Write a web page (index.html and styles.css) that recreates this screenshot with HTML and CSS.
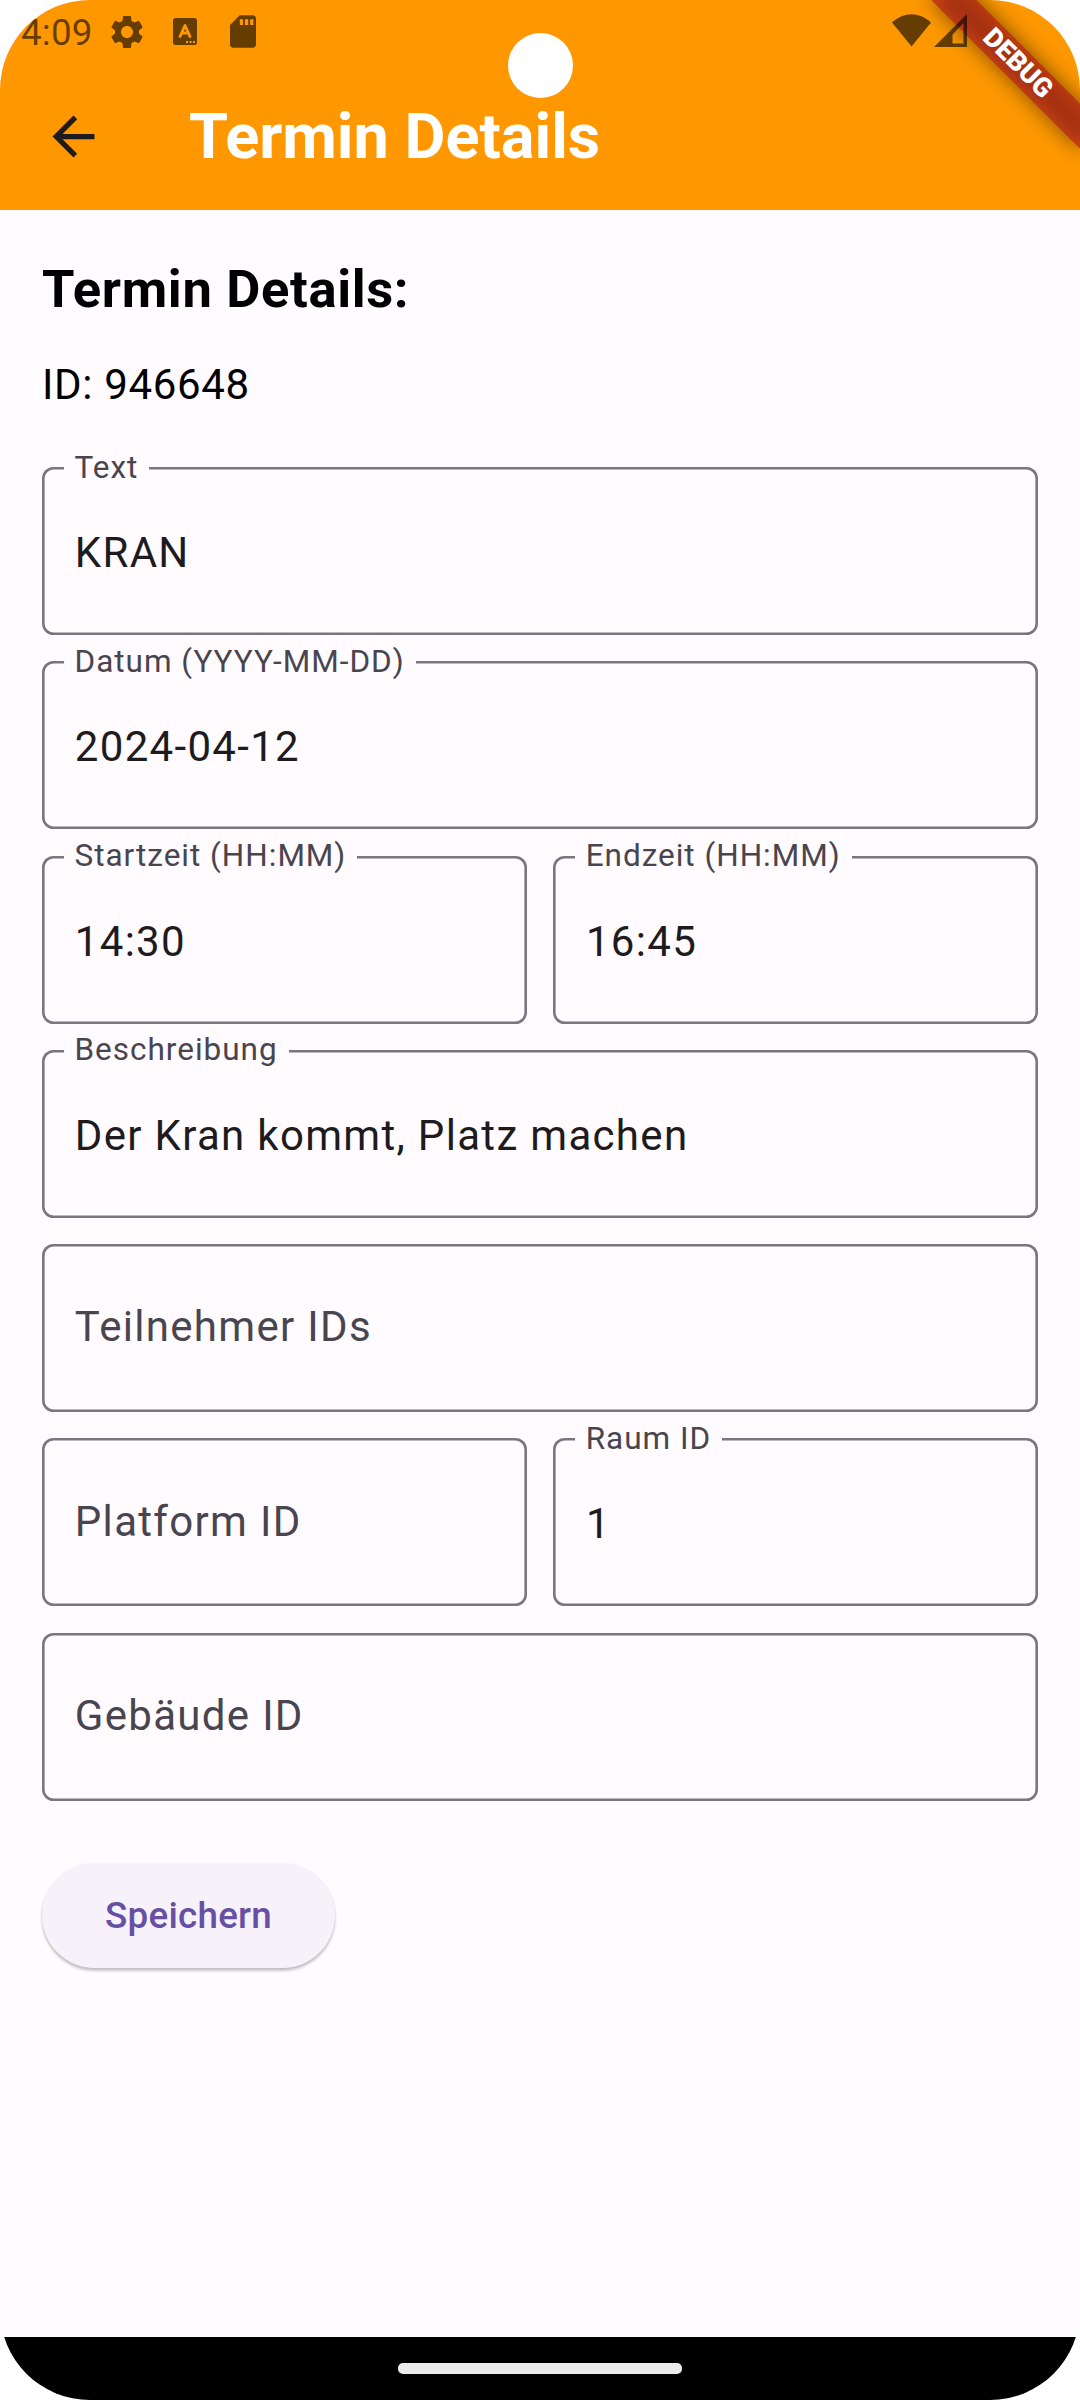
FILE: index.html
```html
<!DOCTYPE html>
<html lang="de">
<head>
<meta charset="utf-8">
<title>Termin Details</title>
<link rel="stylesheet" href="styles.css">
</head>
<body>
<div class="screen">
  <header class="app-bar">
    <svg class="back" viewBox="0 0 24 24"><path d="M20 11H7.83l5.59-5.59L12 4l-8 8 8 8 1.41-1.41L7.83 13H20z"/></svg>
    <h1 class="app-title">Termin Details</h1>
  </header>

  <main class="content">
    <h2 class="heading">Termin Details:</h2>
    <p class="record-id">ID: 946648</p>
    <form class="form">
      <div class="field"><span class="label">Text</span><span class="value">KRAN</span></div>
      <div class="field"><span class="label">Datum (YYYY-MM-DD)</span><span class="value">2024-04-12</span></div>
      <div class="row">
        <div class="field"><span class="label">Startzeit (HH:MM)</span><span class="value">14:30</span></div>
        <div class="field"><span class="label">Endzeit (HH:MM)</span><span class="value">16:45</span></div>
      </div>
      <div class="field"><span class="label">Beschreibung</span><span class="value">Der Kran kommt, Platz machen</span></div>
      <div class="field"><span class="hint">Teilnehmer IDs</span></div>
      <div class="row">
        <div class="field"><span class="hint">Platform ID</span></div>
        <div class="field"><span class="label">Raum ID</span><span class="value">1</span></div>
      </div>
      <div class="field"><span class="hint">Gebäude ID</span></div>
      <button class="save" type="button">Speichern</button>
    </form>
  </main>

  <footer class="nav-bar"><span class="handle"></span></footer>

  <div class="ribbon"><span class="ribbon-text">DEBUG</span></div>

  <div class="status-bar">
    <span class="clock">4:09</span>
    <svg class="gear" viewBox="0 0 24 24"><path d="M19.14 12.94c.04-.3.06-.61.06-.94 0-.32-.02-.64-.07-.94l2.03-1.58c.18-.14.23-.41.12-.61l-1.92-3.32c-.12-.22-.37-.29-.59-.22l-2.39.96c-.5-.38-1.03-.7-1.62-.94L14.4 2.81c-.04-.24-.24-.41-.48-.41h-3.84c-.24 0-.43.17-.47.41l-.36 2.54c-.59.24-1.13.57-1.62.94l-2.39-.96c-.22-.08-.47 0-.59.22L2.74 8.87c-.12.21-.08.47.12.61l2.03 1.58c-.05.3-.09.63-.09.94s.02.64.07.94l-2.03 1.58c-.18.14-.23.41-.12.61l1.92 3.32c.12.22.37.29.59.22l2.39-.96c.5.38 1.03.7 1.62.94l.36 2.54c.05.24.24.41.48.41h3.84c.24 0 .44-.17.47-.41l.36-2.54c.59-.24 1.13-.56 1.62-.94l2.39.96c.22.08.47 0 .59-.22l1.92-3.32c.12-.22.07-.47-.12-.61zM12 15.6c-1.98 0-3.6-1.62-3.6-3.6s1.62-3.6 3.6-3.6 3.6 1.62 3.6 3.6-1.62 3.6-3.6 3.6z"/></svg>
    <svg class="keyboard" viewBox="0 0 24 27">
      <defs><mask id="cut"><rect width="24" height="27" fill="#fff"/><path d="M7 18.5 12 7.5l5 11M9 15h6" fill="none" stroke="#000" stroke-width="2.8" stroke-linecap="round" stroke-linejoin="round"/><path d="M13 23h2v2h-2zM16.500 23h2v2h-2zM20 23h2v2h-2z" fill="#000"/></mask></defs>
      <rect width="24" height="27" rx="2.500" mask="url(#cut)"/>
    </svg>
    <svg class="sd" viewBox="4 2 16 20"><path fill-rule="evenodd" d="M18 2h-8L4 8v12c0 1.100.9 2 2 2h12c1.100 0 2-.9 2-2V4c0-1.100-.9-2-2-2zM12 8h-2V4.400h2zm3.200 0h-2V4.400h2zm3.200 0h-2V4.400h2z"/></svg>
    <svg class="wifi" viewBox="0 0 39 33"><path d="M0 8.500C12-2.500 27-2.500 39 8.500L19.500 32.500z"/></svg>
    <svg class="signal" viewBox="0 0 33 33"><path fill-rule="evenodd" d="M33 0v33H0zM29.500 9 18.500 20.500V29.500H29.500z"/></svg>
  </div>
  <span class="camera"></span>
</div>
</body>
</html>
```

FILE: styles.css
```css
* { box-sizing: border-box; }

body {
  margin: 0;
  background: #fff;
  font-family: Roboto, sans-serif;
}

.screen {
  position: relative;
  display: flex;
  flex-direction: column;
  width: 1080px;
  height: 2400px;
  overflow: hidden;
  border-radius: 90px;
  background: #fffbff;
}

/* App bar */
.app-bar {
  display: flex;
  align-items: center;
  gap: 84px;
  height: 210px;
  padding: 63px 42px 0;
  background: #ff9800;
}

.back {
  width: 63px;
  height: 63px;
  fill: #1d1b1e;
}

.app-title {
  margin: 0;
  color: #fff;
  font-size: 63px;
  font-weight: 700;
  line-height: 80px;
}

/* Content */
.content {
  flex: 1;
  padding: 42px;
}

.heading {
  margin: 0 0 28px;
  color: #000;
  font-size: 52.5px;
  font-weight: 700;
  line-height: 75px;
  letter-spacing: 0.656px;
}

.record-id {
  margin: 0 0 52px;
  color: #000;
  font-size: 42px;
  line-height: 60px;
  letter-spacing: 0.656px;
}

.form {
  display: flex;
  flex-direction: column;
  gap: 26.25px;
}

.row {
  display: grid;
  grid-template-columns: 1fr 1fr;
  gap: 26.25px;
}

.field {
  position: relative;
  display: flex;
  align-items: center;
  height: 168px;
  padding: 0 32.8px;
  border-radius: 11.5px;
  box-shadow: inset 0 0 0 2.6px #7a757f;
  font-size: 42px;
  line-height: 63px;
  letter-spacing: 1.3125px;
}

.value {
  padding-top: 3px;
  color: #1d1b1e;
}

.hint {
  padding-bottom: 2.5px;
  color: #49454e;
}

/* Floating label sits over the outline and interrupts it */
.label {
  position: absolute;
  top: -17.3px;
  left: 22px;
  padding: 0 11px 0 10.5px;
  background: #fffbff;
  color: #49454e;
  font-size: 31.5px;
  line-height: 36px;
  letter-spacing: 0.984px;
}

.save {
  align-self: flex-start;
  height: 105px;
  margin-top: 36px;
  padding: 2px 63px 0;
  border: 0;
  border-radius: 53px;
  background: #f7f2fa;
  box-shadow: 0 3px 3px rgba(0, 0, 0, 0.2), 0 1px 3px rgba(0, 0, 0, 0.08);
  color: #6750a4;
  font: 500 36.75px/52px Roboto, sans-serif;
  letter-spacing: 0.2625px;
}

/* System navigation */
.nav-bar {
  display: flex;
  justify-content: center;
  height: 63px;
  padding-top: 26px;
  background: #000;
}

.handle {
  width: 284px;
  height: 11px;
  border-radius: 5px;
  background: #ebebeb;
}

/* Debug ribbon across the top right corner */
.ribbon {
  position: absolute;
  top: 47px;
  left: 912px;
  display: flex;
  align-items: center;
  justify-content: center;
  width: 210px;
  height: 31.5px;
  padding-left: 2px;
  transform: rotate(45deg);
}

.ribbon::before,
.ribbon::after {
  content: "";
  position: absolute;
  inset: 0;
}

.ribbon::before {
  background: rgba(0, 0, 0, 0.5);
  filter: blur(10.4px);
}

.ribbon::after {
  background: rgba(183, 28, 28, 0.627);
}

.ribbon-text {
  position: relative;
  z-index: 1;
  color: #fff;
  font-size: 26.8px;
  font-weight: 900;
  line-height: 27px;
}

/* System status bar */
.status-bar {
  position: absolute;
  top: 0;
  left: 0;
  display: flex;
  align-items: center;
  width: 1080px;
  height: 63px;
  padding-left: 21px;
  color: rgba(0, 0, 0, 0.6);
}

.status-bar svg {
  flex: none;
  fill: currentColor;
}

.clock {
  width: 86px;
  padding-top: 3px;
  font-size: 36.75px;
  line-height: 44px;
  letter-spacing: 0.2px;
}

.gear { width: 40px; height: 40px; }
.keyboard { width: 24px; height: 27px; margin-left: 26px; }
.sd { width: 26px; height: 33px; margin-left: 33px; }
.wifi { width: 39px; height: 33px; margin: 0 0 3px 636px; }
.signal { width: 33px; height: 33px; margin: 0 0 2px 3px; }

.camera {
  position: absolute;
  top: 33px;
  left: 508px;
  width: 65px;
  height: 65px;
  border-radius: 50%;
  background: #fff;
}
```
